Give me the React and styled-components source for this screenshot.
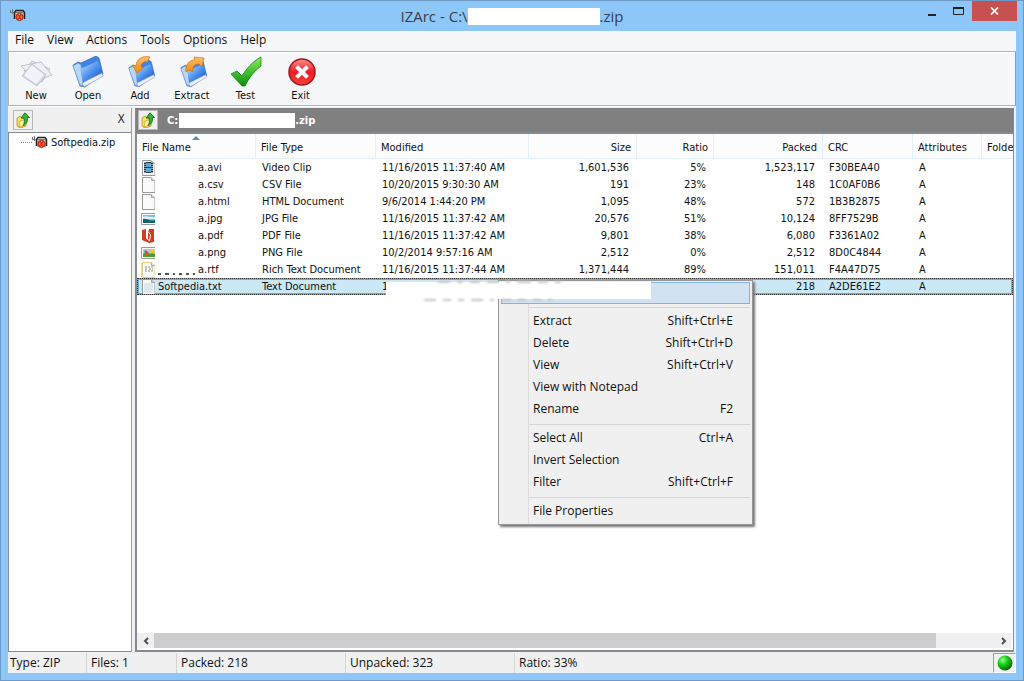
import React from "react";
import styled, { createGlobalStyle } from "styled-components";

const GlobalStyle = createGlobalStyle`
    html, body, #root {
        height: 100%;
        margin: 0;
    }

    * {
        box-sizing: border-box;
    }

    body {
        font-family: "DejaVu Sans Condensed", Tahoma, sans-serif;
        font-size: 11px;
        color: #111;
        overflow: hidden;
    }

    button {
        border: 0;
        padding: 0;
        background: none;
        font: inherit;
        color: inherit;
    }
`;

const segoe = `"Open Sans", "Noto Sans", sans-serif`;

const Window = styled.div`
    height: 100%;
    display: flex;
    flex-direction: column;
    padding: 0 7px 7px;
    border: 1px solid #6c98c4;
    background: #8dc7fa;
`;

const TitleBar = styled.header`
    height: 30px;
    flex: none;
    display: grid;
    grid-template-columns: 1fr auto 1fr;
    align-items: center;
`;

const TitleIcon = styled.div`
    padding-left: 2px;
    padding-bottom: 2px;
    display: flex;
`;

const Title = styled.h1`
    margin: 0;
    display: flex;
    align-items: center;
    font: 400 15px/20px ${segoe};
    color: #3a4046;
`;

const Blank = styled.span`
    display: inline-block;
    flex: none;
    width: ${(p) => p.$w}px;
    height: ${(p) => p.$h}px;
    background: #fff;
`;

const WindowButtons = styled.div`
    justify-self: end;
    align-self: start;
    display: flex;
    margin-right: -1px;
`;

const WindowButton = styled.button`
    width: ${(p) => (p.$close ? 45 : 27)}px;
    height: 20px;
    display: flex;
    align-items: center;
    justify-content: center;
    color: ${(p) => (p.$close ? "#fff" : "#222")};
    background: ${(p) => (p.$close ? "#c75050" : "transparent")};
`;

const Client = styled.div`
    flex: 1;
    min-height: 0;
    display: flex;
    flex-direction: column;
    background: #f0f0f0;
`;

const MenuBar = styled.nav`
    display: flex;
    height: 20px;
    flex: none;
    padding: 0 0 2px 1px;
    gap: 1px;
    background: #f4f6f8;
`;

const MenuButton = styled.button`
    padding: 0 6px;
    font: 400 12px/18px ${segoe};
`;

const Toolbar = styled.div`
    display: flex;
    height: 55px;
    flex: none;
    padding: 4px 0 0 1px;
    border: 1px solid #b4b4b4;
    border-right-color: #999;
    box-shadow: inset 1px 1px #fff;
    background: #f4f6f8;
`;

const ToolButton = styled.button`
    width: ${(p) => (p.$wide ? 55 : 52)}px;
    display: flex;
    flex-direction: column;
    align-items: center;
    line-height: 14px;
    gap: 1px;
`;

const Panes = styled.main`
    flex: 1;
    min-height: 0;
    display: flex;
    gap: 3px;
    padding: 1px 2px 0 0;
    border-top: 1px solid #fff;
`;

const Sidebar = styled.aside`
    width: 124px;
    flex: none;
    display: flex;
    flex-direction: column;
    border-right: 1px solid #a0a0a0;
`;

const PaneBar = styled.div`
    height: 24px;
    flex: none;
    display: flex;
    align-items: center;
    padding: 0 6px 0 ${(p) => (p.$dark ? 2 : 5)}px;
    background: ${(p) => (p.$dark ? "#808080" : "#f0f0f0")};
    color: ${(p) => (p.$dark ? "#fff" : "#333")};
    font-weight: ${(p) => (p.$dark ? 700 : 400)};
`;

const UpButton = styled.button`
    width: 20px;
    height: 20px;
    display: flex;
    align-items: center;
    justify-content: center;
    border: 1px solid #b8b8b8;
    background: #f0f0f0;
`;

const CloseTree = styled.button`
    margin-left: auto;
    padding-bottom: 3px;
    font-size: 12px;
    line-height: 18px;
`;

const Path = styled.div`
    display: flex;
    align-items: center;
    padding-left: 9px;
`;

const PathBlank = styled(Blank)`
    margin-left: 1px;
`;

const Tree = styled.ul`
    flex: 1;
    margin: 0;
    padding: 0 0 0 12px;
    list-style: none;
    background: #fff;
    border: solid #868a91;
    border-width: 1px 0 1px 1px;
`;

const TreeItem = styled.li`
    display: flex;
    align-items: center;
    height: 18px;
    gap: 3px;

    &::before {
        content: "";
        width: 11px;
        margin-right: -3px;
        border-top: 1px dotted #808080;
    }
`;

const Main = styled.section`
    position: relative;
    flex: 1;
    min-width: 0;
    display: flex;
    flex-direction: column;
    border-left: 1px solid #868a91;
    border-right: 1px solid #868a91;
`;

const List = styled.div`
    flex: 1;
    min-height: 0;
    display: flex;
    flex-direction: column;
    background: #fff;
    border: solid #868a91;
    border-width: 2px 0 2px 1px;
`;

const TableWrap = styled.div`
    flex: 1;
    min-height: 0;
    overflow: hidden;
`;

const Table = styled.table`
    width: 100%;
    table-layout: fixed;
    border-collapse: separate;
    border-spacing: 0;
    white-space: nowrap;
`;

const Th = styled.th`
    height: 25px;
    padding: 3px 5px 0;
    font-weight: 400;
    text-align: ${(p) => (p.$right ? "right" : "left")};
    background: #fcfcfc;
    border: solid #e3f0fb;
    border-width: 0 1px 1px 0;

    &:last-child {
        padding-right: 0;
        border-right-width: 0;
    }
`;

const SortArrow = styled.span`
    display: flex;
    justify-content: center;
    height: 0;

    &::before {
        content: "";
        width: 0;
        height: 0;
        margin-top: -5px;
        border: solid transparent;
        border-width: 0 4px 4px;
        border-bottom-color: #5f8ba8;
    }
`;

const Tr = styled.tr`
    background: ${(p) => (p.$selected ? "#cbe8f6" : "transparent")};
    outline: ${(p) => (p.$selected ? "1px dotted #333" : "0")};
    outline-offset: -1px;
    box-shadow: ${(p) => (p.$selected ? "inset 0 0 0 2px #5fb4dc" : "none")};
`;

const Td = styled.td`
    height: 17px;
    padding: ${(p) => (p.$right ? "0 8px" : "0 6px")};
    line-height: 16px;
    text-align: ${(p) => (p.$right ? "right" : "left")};
`;

const NameTd = styled(Td)`
    padding: 0 0 0 4px;
`;

const NameCell = styled.div`
    display: flex;
    align-items: center;
    height: 17px;
`;

const FileIconBox = styled.span`
    flex: none;
    width: 14px;
    height: 16px;
    margin-right: ${(p) => (p.$gap ? 3 : 0)}px;
    overflow: hidden;
`;

const HiddenPrefix = styled.span`
    width: 43px;
    height: 17px;
    flex: none;
    display: flex;
    align-items: flex-end;
    gap: 4px;
    padding: 0 3px 3px;
`;

const Trace = styled.span`
    width: ${(p) => p.$w}px;
    height: 2px;
    background: ${(p) => p.$color};
`;

const ScrollBar = styled.div`
    height: 17px;
    flex: none;
    display: flex;
    margin: 0 1px 0 0;
    background: #f0f0f0;
    border-bottom: 2px solid #fff;
`;

const ScrollArrow = styled.button`
    width: 17px;
    display: flex;
    align-items: center;
    justify-content: center;
`;

const ScrollTrack = styled.div`
    flex: 1;
`;

const ScrollThumb = styled.div`
    width: 93%;
    height: 100%;
    background: #cdcdcd;
`;

const ContextMenu = styled.div`
    position: absolute;
    left: 362px;
    top: 172px;
    width: 255px;
    padding: 1px 2px;
    border: 1px solid #979797;
    background: linear-gradient(#dcdcdc, #dcdcdc) 29px 0 / 1px 100% no-repeat #f0f0f0;
    box-shadow: 2px 2px 2px #777;
    font: 400 12px/18px ${segoe};
`;

const MenuItem = styled.button`
    width: 100%;
    height: 22px;
    display: flex;
    align-items: center;
    justify-content: space-between;
    padding: 0 16px 2px 31px;
    border: 1px solid ${(p) => (p.$active ? "#7eb4ea" : "transparent")};
    background: ${(p) => (p.$active ? "#d1e2f2" : "transparent")};
`;

const Separator = styled.hr`
    height: 1px;
    margin: 3px 0 3px 28px;
    border: 0;
    background: #d5d5d5;
`;

const Cover = styled.div`
    position: absolute;
    left: 250px;
    top: 174px;
    width: 265px;
    height: 17px;
    background: #fff;
`;

const CoverTraces = styled.div`
    position: absolute;
    left: ${(p) => p.$left}px;
    top: ${(p) => p.$top}px;
    display: flex;
    gap: 7px;
    filter: blur(1px);
`;

const StatusBar = styled.footer`
    height: 21px;
    flex: none;
    display: flex;
    padding-top: 1px;
    font: 400 12px/20px ${segoe};
`;

const StatusPane = styled.div`
    width: ${(p) => (p.$w ? `${p.$w}px` : "auto")};
    flex: ${(p) => (p.$w ? "none" : 1)};
    padding-left: ${(p) => (p.$first ? 2 : 4)}px;
    border-right: ${(p) => (p.$w ? "1px solid #d4d4d4" : "0")};
`;

const Lamp = styled.div`
    width: 23px;
    display: flex;
    align-items: center;
    justify-content: center;
    border: 1px solid #a0a0a0;
    border-right-color: #fff;
    border-bottom-color: #fff;
`;

function ArchiveIcon() {
    return (
        <svg width="16" height="13" viewBox="0 0 16 13">
            <path d="M.5 1v3M2.500 0v5M.5 3.500h3" fill="none" stroke="#777" />
            <path d="M5 3h9v8H5z" fill="#c9c2bd" />
            <path d="M4.500 10V3.500L6 1.500h7l1.500 2V10" fill="none" stroke="#26211f" strokeWidth="1.500" />
            <path d="M6 3.500h7" stroke="#7d7774" />
            <circle cx="9.500" cy="8" r="3.600" fill="#ef4a22" stroke="#8b2016" strokeWidth=".8" />
            <path d="M8 6.500h3L8 9.500h3z" fill="#c5110b" />
            <path d="M7.500 8h.8M10.700 8h.8M9.500 5.300v.6M9.500 10v.6" stroke="#ffd44a" />
        </svg>
    );
}

function UpIcon() {
    return (
        <svg width="16" height="16" viewBox="0 0 16 16">
            <path d="M2 6l3-2 2 2 4 1v7l-6 2-3-2z" fill="#f8de67" stroke="#b68f25" strokeWidth=".8" />
            <path d="M5 9l7-2-2 6-6 2z" fill="#fff3a8" stroke="#c9a12e" strokeWidth=".7" />
            <path d="M10 .8l4.500 4.700h-2.300c.8 3.500-.5 6.500-4 8 1.300-2.500 1.500-5 .8-7.500H6z" fill="#35b72c" stroke="#17701b" strokeWidth=".9" />
        </svg>
    );
}

function NewIcon() {
    return (
        <svg width="34" height="32" viewBox="0 0 34 32">
            <g stroke="#b2b5c6" strokeWidth=".8" strokeLinejoin="round">
                <path d="M13 5l18 8-8 13L5 15z" fill="#e8e9f0" />
                <path d="M2 10l20-4 11 13-16 6z" fill="#f0f0f6" />
                <path d="M13 8l14 11-9 11L3 20z" fill="#dcdde9" />
                <path d="M13 10l11 9-7 8-11-8z" fill="#f1f1f7" stroke="#fff" />
            </g>
        </svg>
    );
}

function FolderIcon({ arrow }) {
    return (
        <svg width="32" height="32" viewBox="0 0 32 32">
            <defs>
                <linearGradient id="folder" x1="0" y1="0" x2="1" y2="1">
                    <stop offset="0" stopColor="#c9e4ff" />
                    <stop offset=".5" stopColor="#4c91ed" />
                    <stop offset="1" stopColor="#0945bd" />
                </linearGradient>
                <linearGradient id="orange" x1="0" y1="0" x2="0" y2="1">
                    <stop offset="0" stopColor="#ffc063" />
                    <stop offset="1" stopColor="#f28a13" />
                </linearGradient>
            </defs>
            <g transform={arrow ? "translate(4 4) scale(.86)" : undefined}>
                <path d="M1 9l5-3 3 1L24 0l3 2 4 16-18 13-5-1z" fill="#3f83e4" stroke="#3566b8" strokeWidth=".7" />
                <path d="M1 10l5-3 3 2 2 21-3-1z" fill="#b8d8fb" stroke="#6d9bdc" strokeWidth=".7" />
                <path d="M8 13L26 5l5 13-19 9z" fill="url(#folder)" />
                <path d="M10 27l20-10 1 3-19 11z" fill="#edf1f8" stroke="#8593b1" strokeWidth=".6" />
            </g>
            {arrow === "in" && (
                <path d="M26 1l-3 5c-4-1-6 2-6 5h3l-7 6-5-8 4 1C12 4 18-1 26 1z" fill="url(#orange)" stroke="#c9711a" strokeWidth=".7" />
            )}
            {arrow === "out" && (
                <path d="M10 16C9 9 13 4 19 4l-1-3 10 1-2 9-3-3c-5 0-7 3-6 8-2-2-5-2-7 0z" fill="url(#orange)" stroke="#c9711a" strokeWidth=".7" />
            )}
        </svg>
    );
}

function TestIcon() {
    return (
        <svg width="32" height="32" viewBox="0 0 32 32">
            <defs>
                <linearGradient id="tick" x1="0" y1="0" x2="0" y2="1">
                    <stop offset="0" stopColor="#8eea60" />
                    <stop offset=".6" stopColor="#35bb25" />
                    <stop offset="1" stopColor="#128713" />
                </linearGradient>
            </defs>
            <path d="M1 18l6-3 5 5C17 12 22 6 31 1v9C24 15 19 22 15 30h-3z" fill="url(#tick)" stroke="#168316" strokeWidth=".8" />
        </svg>
    );
}

function ExitIcon() {
    return (
        <svg width="32" height="32" viewBox="0 0 32 32">
            <defs>
                <linearGradient id="exit" x1="0" y1="0" x2="0" y2="1">
                    <stop offset="0" stopColor="#fa9290" />
                    <stop offset=".5" stopColor="#ed1c24" />
                    <stop offset="1" stopColor="#f34037" />
                </linearGradient>
            </defs>
            <circle cx="17" cy="16" r="13" fill="url(#exit)" stroke="#a91419" strokeWidth="1.500" />
            <path d="M13 12l8 8M21 12l-8 8" stroke="#fff" strokeWidth="4" strokeLinecap="square" />
        </svg>
    );
}

function FileIcon({ kind }) {
    if (kind === "pdf") {
        return (
            <svg width="14" height="16" viewBox="0 0 14 16">
                <path d="M1 2l4-1v8l2 3V5l1-4h5v13l-5 1-7-3z" fill="#cf3d25" />
                <path d="M5.500 2v8l3 3 1-6-2-3" fill="none" stroke="#fff" />
            </svg>
        );
    }
    if (kind === "jpg" || kind === "png") {
        return (
            <svg width="14" height="16" viewBox="0 0 14 16">
                <path d="M14 2.500H.5v11H14" fill="#fff" stroke="#999" />
                <path d="M2 4h12v8H2z" fill={kind === "jpg" ? "#74c2ea" : "#a9cdf2"} />
                {kind === "jpg" ? (
                    <>
                        <path d="M2 6c4-2 6 1 12 0v2H2z" fill="#e2f4fb" />
                        <path d="M2 8c4-1 6 3 12 1v3H2z" fill="#16635e" />
                    </>
                ) : (
                    <>
                        <path d="M2 9l4-3 3 3 2-1 3 1v3H2z" fill="#4e9d2b" />
                        <path d="M3 6l2-1 3 4-2 2z" fill="#d8552a" />
                        <path d="M9 5h3l2 3h-4z" fill="#f2c52e" />
                    </>
                )}
            </svg>
        );
    }
    return (
        <svg width="14" height="16" viewBox="0 0 14 16">
            {kind === "rtf" && <path d="M0 1h9v14H0z" fill="#f6dc75" />}
            <path d="M1.500.5H10l4 4v11H1.500z" fill="#fafafa" stroke={kind === "rtf" ? "#e6cf7c" : "#999"} />
            <path d="M10.500.5v3H14" fill="none" stroke="#aaa" />
            {kind === "avi" && (
                <>
                    <path d="M3 2h9v11H3z" fill="#26384f" />
                    <path d="M5 3h5v4H5zM5 8h5v4H5z" fill="#58aad6" />
                    <path d="M4 2v11M11 2v11" stroke="#fff" strokeDasharray="1 1" />
                </>
            )}
            {kind === "rtf" && <path d="M4 5h8M4 7h3M8 7h4M4 9h8" stroke="#998f78" strokeDasharray="2 1" />}
            {kind === "txt" && <path d="M3 5h9M3 7h9M3 9h9M3 11h9M3 13h9" stroke="#c4d5df" />}
        </svg>
    );
}

const tools = [
    { label: "New", icon: <NewIcon /> },
    { label: "Open", icon: <FolderIcon /> },
    { label: "Add", icon: <FolderIcon arrow="in" /> },
    { label: "Extract", icon: <FolderIcon arrow="out" /> },
    { label: "Test", icon: <TestIcon />, wide: true },
    { label: "Exit", icon: <ExitIcon />, wide: true },
];

const columns = [
    { label: "File Name", width: 119, sorted: true },
    { label: "File Type", width: 120 },
    { label: "Modified", width: 153 },
    { label: "Size", width: 108, right: true },
    { label: "Ratio", width: 77, right: true },
    { label: "Packed", width: 109, right: true },
    { label: "CRC", width: 90 },
    { label: "Attributes", width: 69 },
    { label: "Folde" },
];

const files = [
    ["avi", "Video Clip", "11/16/2015 11:37:40 AM", "1,601,536", "5%", "1,523,117", "F30BEA40"],
    ["csv", "CSV File", "10/20/2015 9:30:30 AM", "191", "23%", "148", "1C0AF0B6"],
    ["html", "HTML Document", "9/6/2014 1:44:20 PM", "1,095", "48%", "572", "1B3B2875"],
    ["jpg", "JPG File", "11/16/2015 11:37:42 AM", "20,576", "51%", "10,124", "8FF7529B"],
    ["pdf", "PDF File", "11/16/2015 11:37:42 AM", "9,801", "38%", "6,080", "F3361A02"],
    ["png", "PNG File", "10/2/2014 9:57:16 AM", "2,512", "0%", "2,512", "8D0C4844"],
    ["rtf", "Rich Text Document", "11/16/2015 11:37:44 AM", "1,371,444", "89%", "151,011", "F4A47D75"],
    ["txt", "Text Document", "1", "", "", "218", "A2DE61E2"],
];

const contextItems = [
    ["Open", "", true],
    null,
    ["Extract", "Shift+Ctrl+E"],
    ["Delete", "Shift+Ctrl+D"],
    ["View", "Shift+Ctrl+V"],
    ["View with Notepad", ""],
    ["Rename", "F2"],
    null,
    ["Select All", "Ctrl+A"],
    ["Invert Selection", ""],
    ["Filter", "Shift+Ctrl+F"],
    null,
    ["File Properties", ""],
];

function FileRow({ file }) {
    const [ext, type, modified, size, ratio, packed, crc] = file;
    const selected = ext === "txt";

    return (
        <Tr $selected={selected}>
            <NameTd>
                <NameCell>
                    <FileIconBox $gap={selected}>
                        <FileIcon kind={ext} />
                    </FileIconBox>
                    {!selected && (
                        <HiddenPrefix>
                            {ext === "rtf" &&
                                [4, 4, 2, 4, 4, 2].map((w, i) => <Trace key={i} $w={w} $color="#555" />)}
                        </HiddenPrefix>
                    )}
                    <span>{selected ? "Softpedia.txt" : `a.${ext}`}</span>
                </NameCell>
            </NameTd>
            <Td>{type}</Td>
            <Td>{modified}</Td>
            <Td $right>{size}</Td>
            <Td $right>{ratio}</Td>
            <Td $right>{packed}</Td>
            <Td>{crc}</Td>
            <Td>A</Td>
            <Td />
        </Tr>
    );
}

function App() {
    return (
        <>
            <GlobalStyle />
            <Window>
                <TitleBar>
                    <TitleIcon>
                        <ArchiveIcon />
                    </TitleIcon>
                    <Title>
                        IZArc - C:\<Blank $w={132} $h={17} />.zip
                    </Title>
                    <WindowButtons>
                        <WindowButton aria-label="Minimize">
                            <svg width="10" height="12" viewBox="0 0 10 12">
                                <path d="M1 10h8" stroke="currentColor" strokeWidth="2" />
                            </svg>
                        </WindowButton>
                        <WindowButton aria-label="Maximize">
                            <svg width="11" height="8" viewBox="0 0 11 8">
                                <path d="M.5 1v6.500h10V1" fill="none" stroke="currentColor" />
                                <path d="M0 1h11" stroke="currentColor" strokeWidth="2" />
                            </svg>
                        </WindowButton>
                        <WindowButton $close aria-label="Close">
                            <svg width="9" height="8" viewBox="0 0 9 8">
                                <path d="M1 .5l7 7M8 .5l-7 7" stroke="currentColor" strokeWidth="1.700" />
                            </svg>
                        </WindowButton>
                    </WindowButtons>
                </TitleBar>

                <Client>
                    <MenuBar>
                        {["File", "View", "Actions", "Tools", "Options", "Help"].map((m) => (
                            <MenuButton key={m}>{m}</MenuButton>
                        ))}
                    </MenuBar>

                    <Toolbar>
                        {tools.map((t) => (
                            <ToolButton key={t.label} $wide={t.wide}>
                                {t.icon}
                                {t.label}
                            </ToolButton>
                        ))}
                    </Toolbar>

                    <Panes>
                        <Sidebar>
                            <PaneBar>
                                <UpButton aria-label="Up one level">
                                    <UpIcon />
                                </UpButton>
                                <CloseTree>X</CloseTree>
                            </PaneBar>
                            <Tree>
                                <TreeItem>
                                    <ArchiveIcon />
                                    Softpedia.zip
                                </TreeItem>
                            </Tree>
                        </Sidebar>

                        <Main>
                            <PaneBar $dark>
                                <UpButton aria-label="Up one level">
                                    <UpIcon />
                                </UpButton>
                                <Path>
                                    C:
                                    <PathBlank $w={116} $h={15} />
                                    .zip
                                </Path>
                            </PaneBar>
                            <List>
                                <TableWrap>
                                    <Table>
                                        <colgroup>
                                            {columns.map((c) => (
                                                <col key={c.label} width={c.width} />
                                            ))}
                                        </colgroup>
                                        <thead>
                                            <tr>
                                                {columns.map((c) => (
                                                    <Th key={c.label} $right={c.right}>
                                                        {c.sorted && <SortArrow />}
                                                        {c.label}
                                                    </Th>
                                                ))}
                                            </tr>
                                        </thead>
                                        <tbody>
                                            {files.map((f) => (
                                                <FileRow key={f[0]} file={f} />
                                            ))}
                                        </tbody>
                                    </Table>
                                </TableWrap>
                                <ScrollBar>
                                    <ScrollArrow aria-label="Scroll left">
                                        <svg width="6" height="8" viewBox="0 0 6 8">
                                            <path d="M5 1L2 4l3 3" fill="none" stroke="#505050" strokeWidth="2" />
                                        </svg>
                                    </ScrollArrow>
                                    <ScrollTrack>
                                        <ScrollThumb />
                                    </ScrollTrack>
                                    <ScrollArrow aria-label="Scroll right">
                                        <svg width="6" height="8" viewBox="0 0 6 8">
                                            <path d="M1 1l3 3-3 3" fill="none" stroke="#505050" strokeWidth="2" />
                                        </svg>
                                    </ScrollArrow>
                                </ScrollBar>
                            </List>

                            <ContextMenu role="menu">
                                {contextItems.map((item, i) =>
                                    item ? (
                                        <MenuItem key={item[0]} role="menuitem" $active={item[2]}>
                                            <span>{item[0]}</span>
                                            <span>{item[1]}</span>
                                        </MenuItem>
                                    ) : (
                                        <Separator key={i} />
                                    )
                                )}
                            </ContextMenu>
                            <Cover />
                            <CoverTraces $left={288} $top={191}>
                                {[12, 8, 6, 12, 4, 10, 8, 8, 4].map((w, i) => (
                                    <Trace key={i} $w={w} $color="#c4c4c4" />
                                ))}
                            </CoverTraces>
                            <CoverTraces $left={302} $top={173}>
                                {[12, 6, 10, 12, 4, 14, 10, 6].map((w, i) => (
                                    <Trace key={i} $w={w} $color="#c4c4c4" />
                                ))}
                            </CoverTraces>
                        </Main>
                    </Panes>

                    <StatusBar>
                        <StatusPane $w={79} $first>Type: ZIP</StatusPane>
                        <StatusPane $w={90}>Files: 1</StatusPane>
                        <StatusPane $w={169}>Packed: 218</StatusPane>
                        <StatusPane $w={169}>Unpacked: 323</StatusPane>
                        <StatusPane>Ratio: 33%</StatusPane>
                        <Lamp>
                            <svg width="16" height="16" viewBox="0 0 16 16">
                                <defs>
                                    <radialGradient id="lamp" cx=".35" cy=".3" r=".7">
                                        <stop offset="0" stopColor="#9dff8d" />
                                        <stop offset=".4" stopColor="#22d822" />
                                        <stop offset="1" stopColor="#067006" />
                                    </radialGradient>
                                </defs>
                                <circle cx="8" cy="8" r="7.500" fill="url(#lamp)" />
                            </svg>
                        </Lamp>
                    </StatusBar>
                </Client>
            </Window>
        </>
    );
}

export default App;
